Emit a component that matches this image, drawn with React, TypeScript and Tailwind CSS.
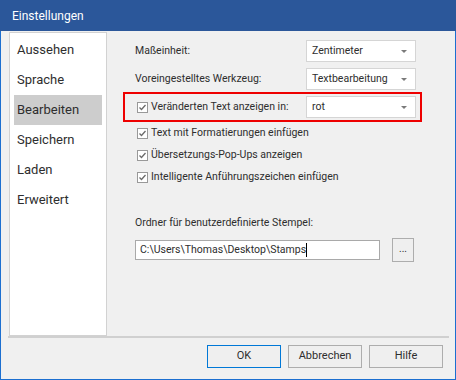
const Caret = () => (
    <svg width="6" height="3" viewBox="0 0 6 3" className="shrink-0">
        <path d="M0 0 H6 L3 3 Z" fill="#7a7a7a" />
    </svg>
);

const Select = ({value}: {value: string}) => (
    <div className="w-[110px] h-[22px] bg-white border border-[#d5d5d5] flex items-center justify-between pl-[5px] pr-[8px]">
        <span>{value}</span>
        <Caret />
    </div>
);

const Check = () => (
    <div className="w-[11px] h-[11px] border border-[#999] bg-white flex items-center justify-center shrink-0">
        <svg width="9" height="9" viewBox="0 0 9 9">
            <path d="M1.5 4.5 L3.5 6.5 L7.5 2" stroke="#6a6a6a" strokeWidth="1.3" fill="none" />
        </svg>
    </div>
);

const menu = ["Aussehen", "Sprache", "Bearbeiten", "Speichern", "Laden", "Erweitert"];

const checks = [
    "Text mit Formatierungen einfügen",
    "Übersetzungs-Pop-Ups anzeigen",
    "Intelligente Anführungszeichen einfügen",
];

export default function App() {
    return (
        <div className="w-[456px] h-[380px] bg-[#f0f0f0] border border-[#1c6fd0] border-t-0 flex flex-col text-[#2e2e2e] text-[10.5px] whitespace-nowrap" style={{fontFamily: 'Roboto, "Noto Sans", sans-serif'}}>
            {/* title bar */}
            <div className="h-[31px] bg-[#2b579a] text-white text-[12px] flex items-center pl-[12px] shrink-0 -mx-px">
                Einstellungen
            </div>

            <div className="flex pl-[8px] pt-px">
                {/* left nav */}
                <div className="w-[98px] h-[304px] bg-white border border-[#d2d2d2] pt-[2px] px-[4px] text-[13px]">
                    {menu.map((m) => (
                        <div
                            key={m}
                            className={`h-[30px] flex items-center pl-[3px] ${m === "Bearbeiten" ? "bg-[#cdcdcd]" : ""}`}
                        >
                            {m}
                        </div>
                    ))}
                </div>

                {/* settings panel */}
                <div className="pl-[16px] pt-[8px] flex flex-col">
                    <div className="flex items-center h-[22px] pl-[12px]">
                        <span className="w-[171px]">Maßeinheit:</span>
                        <Select value="Zentimeter" />
                    </div>
                    <div className="flex items-center h-[22px] pl-[12px] mt-[6px]">
                        <span className="w-[171px]">Voreingestelltes Werkzeug:</span>
                        <Select value="Textbearbeitung" />
                    </div>

                    <div className="w-[299px] h-[30px] border-2 border-[#ee0000] mt-[2px] flex items-center pl-[12px]">
                        <div className="w-[169px] flex items-center gap-[3px]">
                            <Check />
                            <span>Veränderten Text anzeigen in:</span>
                        </div>
                        <Select value="rot" />
                    </div>

                    {checks.map((c) => (
                        <div key={c} className="h-[22px] flex items-center gap-[3px] pl-[14px]">
                            <Check />
                            <span>{c}</span>
                        </div>
                    ))}

                    <div className="pl-[12px] mt-[27px]">Ordner für benutzerdefinierte Stempel:</div>
                    <div className="flex items-center pl-[12px] mt-[7px]">
                        <div className="w-[245px] h-[20px] bg-white border border-[#a9a9a9] flex items-center pl-[4px]">
                            <span>C:\Users\Thomas\Desktop\Stamps</span>
                            <span className="w-px h-[14px] bg-black" />
                        </div>
                        <button className="ml-[12px] w-[22px] h-[24px] border border-[#adadad] bg-[#efefef] text-[10px] leading-none pb-[2px]">
                            ...
                        </button>
                    </div>
                </div>
            </div>

            {/* separator */}
            <div className="ml-[7px] mr-[6px] h-[2px] bg-[#d0d0d0]" />

            {/* buttons */}
            <div className="flex justify-end gap-[7px] pr-[12px] pt-[7px] text-[11px]">
                <button className="w-[74px] h-[23px] border border-[#0078d7] bg-[#efefef]">OK</button>
                <button className="w-[74px] h-[23px] border border-[#adadad] bg-[#efefef]">Abbrechen</button>
                <button className="w-[74px] h-[23px] border border-[#adadad] bg-[#efefef]">Hilfe</button>
            </div>
        </div>
    );
}
